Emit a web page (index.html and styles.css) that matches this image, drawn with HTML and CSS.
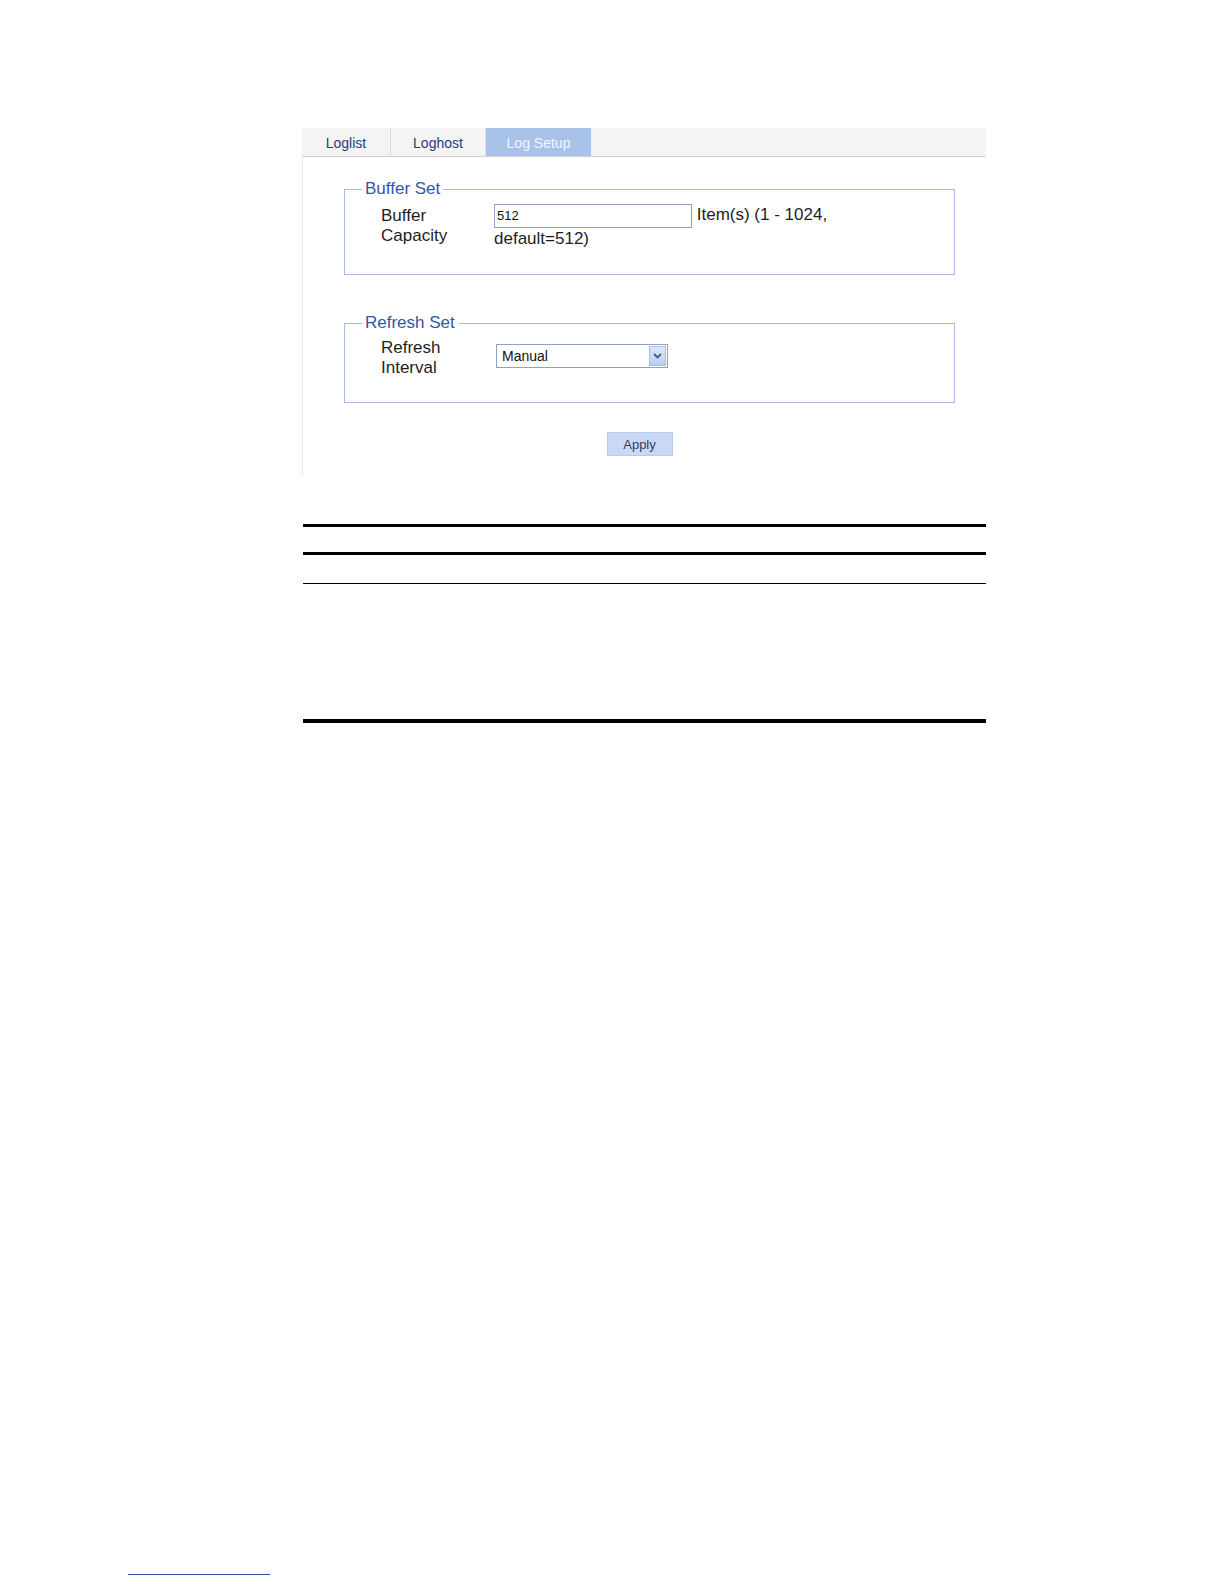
FILE: index.html
```html
<!DOCTYPE html>
<html lang="en">
<head>
<meta charset="utf-8">
<title>Log Setup</title>
<link rel="stylesheet" href="styles.css">
</head>
<body>
<main class="page">
  <section class="shot">
    <nav class="tabs">
      <div class="tab tab-loglist">Loglist</div>
      <div class="tab tab-loghost">Loghost</div>
      <div class="tab tab-active">Log Setup</div>
    </nav>
    <div class="panel">
      <fieldset class="group group-buffer">
        <legend>Buffer Set</legend>
        <div class="row">
          <div class="label">Buffer<br>Capacity</div>
          <div class="value value-buffer"><span class="input">512</span> <span class="hint">Item(s) (1 - 1024,</span> <span class="hint">default=512)</span></div>
        </div>
      </fieldset>
      <fieldset class="group group-refresh">
        <legend>Refresh Set</legend>
        <div class="row">
          <div class="label">Refresh<br>Interval</div>
          <div class="value value-refresh">
            <div class="select">
              <span class="select-text">Manual</span>
              <span class="select-arrow">
                <svg width="9" height="6" viewBox="0 0 9 6"><path d="M1 1 L4.5 4.5 L8 1" fill="none" stroke="#47598a" stroke-width="1.8"/></svg>
              </span>
            </div>
          </div>
        </div>
      </fieldset>
      <div class="actions"><button class="btn" type="button">Apply</button></div>
    </div>
  </section>
  <section class="table">
    <div class="thead"></div>
    <div class="trow"></div>
    <div class="tbody"></div>
  </section>
</main>
<footer class="footer"><div class="footnote-rule"></div></footer>
</body>
</html>
```

FILE: styles.css
```css
html, body {
  margin: 0;
  padding: 0;
  background: #ffffff;
}
body {
  font-family: "Liberation Sans", Arial, sans-serif;
  color: #1e1e1e;
}
.page {
  padding: 128px 0 0 302px;
  width: 684px;
}
.shot {
  width: 684px;
}
.tabs {
  display: flex;
  height: 28px;
  background: #f4f4f4;
  border-bottom: 1px solid #d2d2d2;
}
.tab {
  font-size: 14px;
  line-height: 25px;
  padding-top: 3px;
  box-sizing: border-box;
  color: #2a3a74;
  text-align: center;
}
.tab-loglist {
  width: 89px;
  border-right: 1px solid #d9d9d9;
}
.tab-loghost {
  width: 95px;
  border-right: 1px solid #e2e2e2;
}
.tab-active {
  width: 105px;
  background: #a9c2ea;
  color: #f2f6fd;
}
.panel {
  border-left: 1px solid #e6e6e6;
  padding: 22px 31px 19px 41px;
}
.group {
  margin: 0;
  border: 1px solid #a9bce2;
  padding: 7px 0 25px 0;
  min-width: 0;
}
.group legend {
  margin-left: 17px;
  padding: 0 3px;
  font-size: 17px;
  line-height: 20px;
  color: #3456a4;
}
.group-refresh {
  margin-top: 38px;
  padding-top: 5px;
  padding-bottom: 24px;
}
.row {
  display: flex;
  align-items: flex-start;
  padding-left: 36px;
}
.label {
  width: 113px;
  font-size: 17px;
  line-height: 20px;
  color: #1e1e1e;
}
.value {
  font-size: 17px;
  line-height: 20px;
  color: #1e1e1e;
}
.value-buffer {
  width: 360px;
  margin-top: -2px;
}
.input {
  display: inline-block;
  vertical-align: baseline;
  box-sizing: border-box;
  width: 198px;
  height: 24px;
  margin-bottom: 1px;
  border: 1px solid #8ea2c3;
  padding: 0 2px;
  font-size: 13px;
  line-height: 22px;
  color: #111;
  background: #fff;
}
.value-refresh {
  margin-top: 6px;
  margin-left: 2px;
}
.select {
  box-sizing: border-box;
  width: 172px;
  height: 24px;
  border: 1px solid #8ea2c3;
  display: flex;
  align-items: center;
  justify-content: space-between;
  padding: 0 1px 0 5px;
  background: #fff;
}
.select-text {
  font-size: 14px;
  line-height: 20px;
  color: #111;
}
.select-arrow {
  box-sizing: border-box;
  width: 17px;
  height: 20px;
  border: 1px solid #a9bde6;
  background: linear-gradient(#dfe8fa, #b9cdf0);
  display: flex;
  align-items: center;
  justify-content: center;
}
.actions {
  display: flex;
  justify-content: center;
  margin-top: 29px;
  padding-right: 20px;
}
.btn {
  box-sizing: border-box;
  width: 66px;
  height: 24px;
  margin: 0;
  padding: 0;
  border: 1px solid #b6c9ee;
  background: #c9d9f5;
  font-family: "Liberation Sans", Arial, sans-serif;
  font-size: 13px;
  color: #363d5c;
}
.table {
  margin-top: 49px;
  margin-left: 1px;
  width: 683px;
}
.thead {
  height: 25px;
  border-top: 3px solid #000;
  border-bottom: 3px solid #000;
}
.trow {
  height: 28px;
  border-bottom: 1px solid #000;
}
.tbody {
  height: 135px;
  border-bottom: 4px solid #000;
}
.footer {
  margin: 851px 0 0 128px;
  width: 142px;
}
.footnote-rule {
  height: 1px;
  background: #2a4ea0;
}
```
